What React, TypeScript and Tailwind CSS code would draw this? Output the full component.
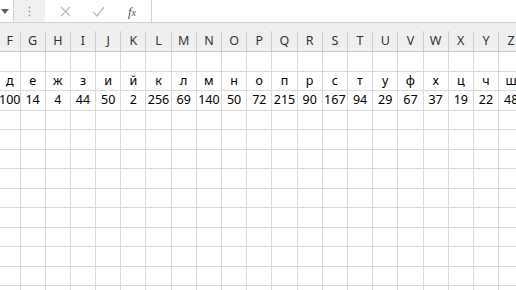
import React from 'react';

const cols = ['F', 'G', 'H', 'I', 'J', 'K', 'L', 'M', 'N', 'O', 'P', 'Q', 'R', 'S', 'T', 'U', 'V', 'W', 'X', 'Y', 'Z'];
const letters = ['д', 'е', 'ж', 'з', 'и', 'й', 'к', 'л', 'м', 'н', 'о', 'п', 'р', 'с', 'т', 'у', 'ф', 'х', 'ц', 'ч', 'ш'];
const counts = ['100', '14', '4', '44', '50', '2', '256', '69', '140', '50', '72', '215', '90', '167', '94', '29', '67', '37', '19', '22', '48'];

const gridCols = 'grid w-[525px] grid-cols-[20.5px_repeat(20,25.2px)]';

const Row = ({ cells }: { cells: string[] }) => (
  <div className={`${gridCols} h-[19.5px] border-b border-[#d9d9d9]`}>
    {cells.map((c, i) => (
      <div
        key={i}
        className="flex items-center justify-center overflow-visible whitespace-nowrap border-r border-[#d9d9d9] text-[12.5px] text-black"
      >
        {c}
      </div>
    ))}
  </div>
);

const App = () => {
  const empty = cols.map(() => '');
  return (
    <div className="h-[290px] w-[516px] overflow-hidden bg-white font-['Noto_Sans',sans-serif]">
      {/* formula bar */}
      <div className="flex h-[23px] border-b border-[#d4d4d4]">
        <div className="flex w-[14px] items-center border-r border-[#d4d4d4] pl-[1px]">
          <svg width="8" height="5" viewBox="0 0 8 5">
            <path d="M0 0 L8 0 L4 5 Z" fill="#606060" />
          </svg>
        </div>
        <div className="flex w-[31px] items-center justify-center bg-[#f0f0f0]">
          <svg width="3" height="11" viewBox="0 0 3 11">
            <circle cx="1.5" cy="1.5" r="0.9" fill="#a0a0a0" />
            <circle cx="1.5" cy="5.5" r="0.9" fill="#a0a0a0" />
            <circle cx="1.5" cy="9.5" r="0.9" fill="#a0a0a0" />
          </svg>
        </div>
        <div className="flex w-[107px] items-center border-r border-[#d4d4d4]">
          <div className="flex w-[36px] justify-center pl-[4px]">
            <svg width="11" height="11" viewBox="0 0 11 11">
              <path d="M1 1 L10 10 M10 1 L1 10" stroke="#bdbdbd" strokeWidth="1.3" />
            </svg>
          </div>
          <div className="flex w-[34px] justify-center">
            <svg width="13" height="11" viewBox="0 0 13 11">
              <path d="M1 6 L5 10 L12 1" stroke="#bdbdbd" strokeWidth="1.3" fill="none" />
            </svg>
          </div>
          <div className="flex w-[34px] items-center justify-center font-['Liberation_Serif',serif] italic leading-none text-[#555]">
            <span className="text-[13px]">f</span>
            <span className="relative top-[2px] text-[10px]">x</span>
          </div>
        </div>
        <div className="flex-1" />
      </div>

      {/* column headers */}
      <div className="bg-[#efefef] pt-[8px]">
        <div className={`${gridCols} h-[21px] border-b border-[#c6c6c6]`}>
          {cols.map((c) => (
            <div
              key={c}
              className="flex items-center justify-center border-r border-[#d0d0d0] text-[12.5px] text-[#333]"
            >
              {c}
            </div>
          ))}
        </div>
      </div>

      {/* cells */}
      <Row cells={empty} />
      <Row cells={letters} />
      <Row cells={counts} />
      {Array.from({ length: 10 }).map((_, i) => (
        <Row key={i} cells={empty} />
      ))}
    </div>
  );
};

export default App;
